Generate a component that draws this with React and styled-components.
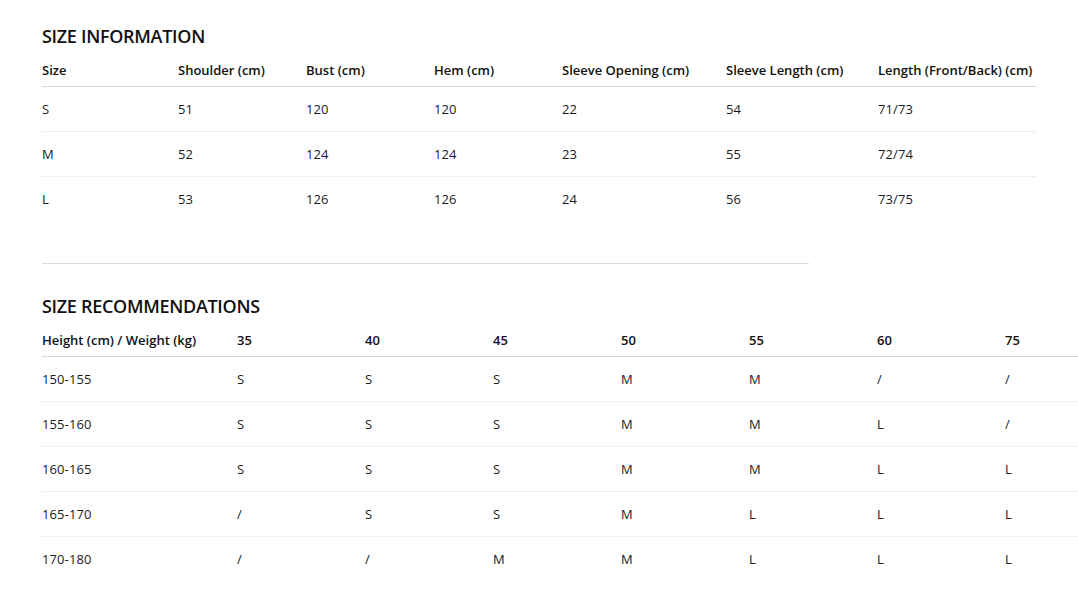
import React from "react";
import styled, { createGlobalStyle } from "styled-components";

const sizeColumns = "136px 128px 128px 128px 164px 152px 158px";
const recColumns = "195px 128px 128px 128px 128px 128px 128px 128px";

const sizeHeaders = [
  "Size",
  "Shoulder (cm)",
  "Bust (cm)",
  "Hem (cm)",
  "Sleeve Opening (cm)",
  "Sleeve Length (cm)",
  "Length (Front/Back) (cm)",
];

const sizeRows = [
  ["S", "51", "120", "120", "22", "54", "71/73"],
  ["M", "52", "124", "124", "23", "55", "72/74"],
  ["L", "53", "126", "126", "24", "56", "73/75"],
];

const recHeaders = ["Height (cm) / Weight (kg)", "35", "40", "45", "50", "55", "60", "75"];

const recRows = [
  ["150-155", "S", "S", "S", "M", "M", "/", "/"],
  ["155-160", "S", "S", "S", "M", "M", "L", "/"],
  ["160-165", "S", "S", "S", "M", "M", "L", "L"],
  ["165-170", "/", "S", "S", "M", "L", "L", "L"],
  ["170-180", "/", "/", "M", "M", "L", "L", "L"],
];

const SizeTable = ({ columns, headers, rows, width }) => (
  <Table width={width}>
    <HeadRow columns={columns}>
      {headers.map((h) => (
        <HeadCell key={h}>{h}</HeadCell>
      ))}
    </HeadRow>
    {rows.map((row, i) => (
      <BodyRow key={i} columns={columns} last={i === rows.length - 1}>
        {row.map((cell, j) => (
          <Cell key={j}>{cell}</Cell>
        ))}
      </BodyRow>
    ))}
  </Table>
);

const App = () => (
  <>
    <GlobalStyle />
    <Page>
      <Section>
        <Title>SIZE INFORMATION</Title>
        <SizeTable columns={sizeColumns} headers={sizeHeaders} rows={sizeRows} width="994px" />
      </Section>

      <Divider />

      <Section>
        <Title>SIZE RECOMMENDATIONS</Title>
        <SizeTable columns={recColumns} headers={recHeaders} rows={recRows} width="1091px" />
      </Section>
    </Page>
  </>
);

const GlobalStyle = createGlobalStyle`
  html, body {
    margin: 0;
    padding: 0;
    background: #ffffff;
    overflow: hidden;
  }
  body {
    font-family: "Open Sans", "Noto Sans", sans-serif;
    color: #1b1b1b;
  }
`;

const Page = styled.div`
  width: 1078px;
  overflow: hidden;
  padding: 24px 0 0 42px;
  box-sizing: border-box;
`;

const Section = styled.section`
  display: flex;
  flex-direction: column;
`;

const Title = styled.h2`
  margin: 0 0 4px 0;
  font-size: 18px;
  line-height: 24px;
  font-weight: 600;
  letter-spacing: -0.3px;
  color: #111;
`;

const Table = styled.div`
  width: ${(p) => p.width};
  flex-shrink: 0;
`;

const HeadRow = styled.div`
  display: grid;
  grid-template-columns: ${(p) => p.columns};
  height: 32px;
  padding-top: 2px;
  align-items: center;
  border-bottom: 1px solid #d6d6d6;
`;

const BodyRow = styled.div`
  display: grid;
  grid-template-columns: ${(p) => p.columns};
  height: 45px;
  align-items: center;
  border-bottom: 1px solid ${(p) => (p.last ? "transparent" : "#efefef")};
  box-sizing: border-box;
`;

const HeadCell = styled.div`
  font-size: 13px;
  font-weight: 600;
  letter-spacing: 0;
  white-space: nowrap;
  color: #111;
`;

const Cell = styled.div`
  font-size: 13px;
  font-weight: 400;
  letter-spacing: 0.1px;
  color: #1b1b1b;
`;

const Divider = styled.hr`
  width: 767px;
  margin: 41px 0 30px 0;
  border: none;
  border-top: 1px solid #dcdcdc;
`;

export default App;
